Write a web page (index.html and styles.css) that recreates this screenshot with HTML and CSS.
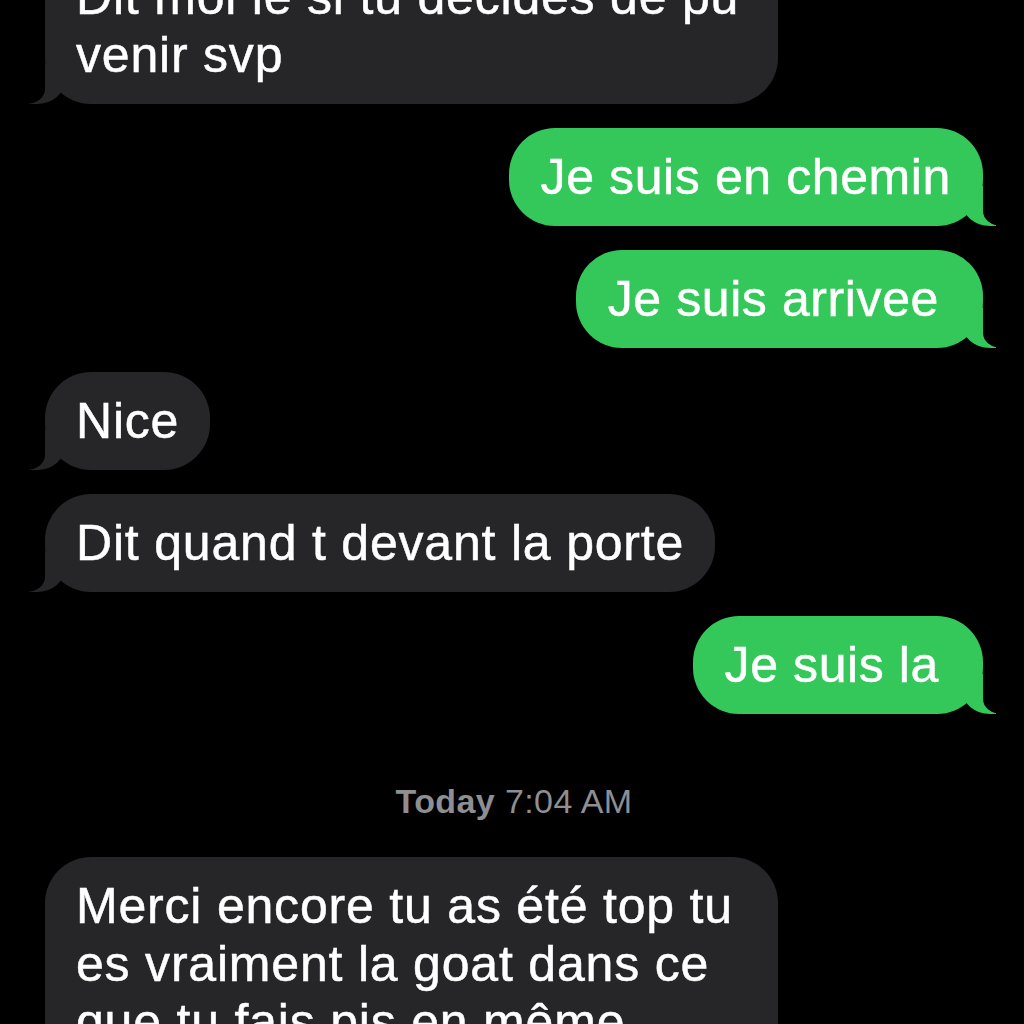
FILE: index.html
```html
<!DOCTYPE html>
<html lang="fr">

<head>
    <meta charset="UTF-8">
    <meta name="viewport" content="width=device-width, initial-scale=1.0">
    <title>Messages</title>
    <link rel="stylesheet" href="styles.css">
</head>

<body>
    <div class="thread">
        <div class="bubble received first">Dit moi le si tu decides de pu venir svp</div>
        <div class="bubble sent">Je suis en chemin</div>
        <div class="bubble sent wide">Je suis arrivee</div>
        <div class="bubble received">Nice</div>
        <div class="bubble received">Dit quand t devant la porte</div>
        <div class="bubble sent wide">Je suis la</div>
        <div class="stamp"><b>Today</b> 7:04 AM</div>
        <div class="bubble received">Merci encore tu as été top tu es vraiment la goat dans ce que tu fais pis en même temps</div>
    </div>
</body>

</html>
```

FILE: styles.css
```css
* {
    padding: 0;
    margin: 0;
    box-sizing: border-box;
}

body {
    background: #000;
    width: 1024px;
    height: 1024px;
    overflow: hidden;
    font-family: "Liberation Sans", Arial, sans-serif;
}

.thread {
    display: flex;
    flex-direction: column;
    align-items: flex-start;
    gap: 24px;
    padding: 0 41px 0 45px;
}

.bubble {
    position: relative;
    font-size: 50px;
    line-height: 58px;
    padding: 20px 31px;
    border-radius: 46px;
    color: #fff;
    -webkit-text-stroke: 0.5px #fff;
}

.bubble.first {
    margin-top: -52px;
}

.received {
    background: #262628;
    max-width: 733px;
    letter-spacing: 0.8px;
}

.sent {
    align-self: flex-end;
    background: #34c759;
    padding: 20px 32px;
    letter-spacing: 0.6px;
}

.sent.wide {
    padding-right: 44px;
}

/* tails */
.bubble::before,
.bubble::after {
    content: "";
    position: absolute;
    bottom: 0;
    height: 40px;
}

.received::before {
    left: -16px;
    width: 36px;
    background: #262628;
    border-bottom-right-radius: 28px 24px;
}

.received::after {
    left: -44px;
    width: 44px;
    background: #000;
    border-bottom-right-radius: 18px 15px;
}

.sent::before {
    right: -13px;
    width: 34px;
    background: #34c759;
    border-bottom-left-radius: 28px 24px;
}

.sent::after {
    right: -44px;
    width: 44px;
    background: #000;
    border-bottom-left-radius: 18px 15px;
}

.stamp {
    align-self: center;
    margin: 43px 0 12px;
    font-size: 34px;
    line-height: 40px;
    letter-spacing: 0.4px;
    color: #8e8e93;
}

.stamp b {
    font-weight: bold;
}
```
